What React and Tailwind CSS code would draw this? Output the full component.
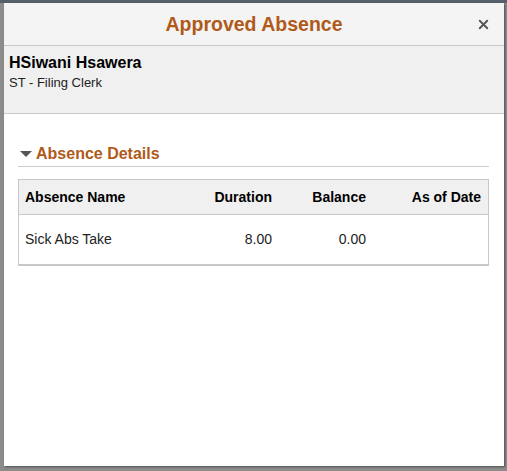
import React from 'react';
import { X } from 'lucide-react';

const rows = [
  { name: 'Sick Abs Take', duration: '8.00', balance: '0.00', asOf: '' },
];

const App = () => {
  return (
    <div
      className="w-[507px] h-[471px] bg-[#8c8c8c] overflow-hidden flex flex-col"
      style={{ fontFamily: '"Liberation Sans", Arial, sans-serif' }}
    >
      {/* page behind the modal */}
      <div className="h-[3px] bg-[#56606a] shrink-0" />

      {/* Modal */}
      <div className="ml-[4px] w-[500px] h-[463px] bg-white flex flex-col shadow-[1px_1px_2px_rgba(0,0,0,0.45)]">
        {/* Header */}
        <div className="relative h-[43px] bg-[#f4f4f4] border-b border-[#c9c9c9] flex items-center justify-center shrink-0">
          <h1 className="text-[19.5px] font-bold text-[#b05a1a] leading-none mt-[1px]">Approved Absence</h1>
          <button className="absolute right-[13px] top-[14px] text-[#555]">
            <X size={15} strokeWidth={3} />
          </button>
        </div>

        {/* Person */}
        <div className="h-[68px] bg-[#f0f0f0] border-b border-[#c9c9c9] px-[5px] pt-[8px] shrink-0">
          <div className="text-[16px] font-bold text-black leading-[18px]">HSiwani Hsawera</div>
          <div className="text-[13px] text-[#222] leading-[16px] mt-[3px]">ST - Filing Clerk</div>
        </div>

        {/* Content */}
        <div className="pl-[14px] pr-[15px] pt-[30px]">
          <div className="flex items-center gap-[4px] border-b border-[#cccccc] pb-[2px] pl-[2px]">
            <svg width="12" height="7" viewBox="0 0 12 7" className="shrink-0">
              <polygon points="0,0 12,0 6,6" fill="#555" />
            </svg>
            <span className="text-[16px] font-bold text-[#b05a1a] leading-[20px]">Absence Details</span>
          </div>

          <div className="mt-[12px] border border-[#c8c8c8] border-b-2">
            <div className="grid grid-cols-[1fr_100px_94px_115px] h-[35px] items-center bg-[#f0f0f0] border-b border-[#c8c8c8] text-[14px] font-bold text-black pl-[6px] pr-[7px]">
              <div>Absence Name</div>
              <div className="text-right">Duration</div>
              <div className="text-right">Balance</div>
              <div className="text-right">As of Date</div>
            </div>
            {rows.map((r) => (
              <div
                key={r.name}
                className="grid grid-cols-[1fr_100px_94px_115px] h-[49px] items-center text-[14px] text-[#222] pl-[6px] pr-[7px]"
              >
                <div>{r.name}</div>
                <div className="text-right">{r.duration}</div>
                <div className="text-right">{r.balance}</div>
                <div className="text-right">{r.asOf}</div>
              </div>
            ))}
          </div>
        </div>
      </div>
    </div>
  );
};

export default App;
